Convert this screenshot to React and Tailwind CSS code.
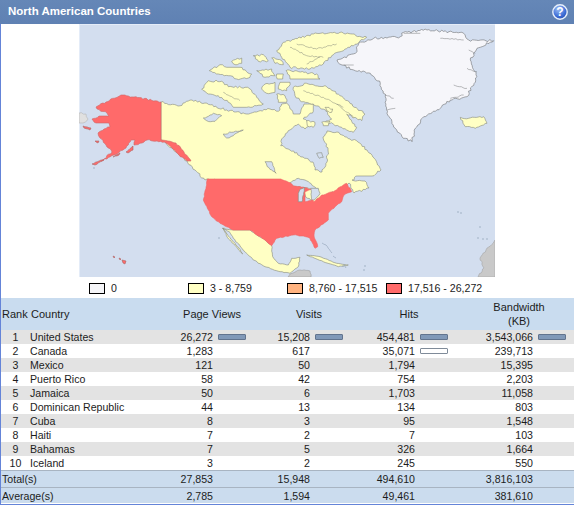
import React from "react";

const z9 = (a) => a.map(([x, y]) => [150 + x / 3, 24 + y / 3]);
const z10 = (a) => a.map(([x, y]) => [190 + x / 3, 150 + y / 3]);
const z2 = (a) => a.map(([x, y]) => [287 + x / 3, y / 3]);

let seed = 12345;
const rnd = () => {
  seed = (seed * 16807) % 2147483647;
  return seed / 2147483647 - 0.5;
};
function rough(pts, amp = 1.2, open = false) {
  let d = "";
  pts.forEach((p, i) => {
    if (open && i === pts.length - 1) {
      d += "L" + p[0].toFixed(1) + " " + p[1].toFixed(1);
      return;
    }
    const q = pts[(i + 1) % pts.length];
    const dx = q[0] - p[0];
    const dy = q[1] - p[1];
    d += (i === 0 ? "M" : "L") + p[0].toFixed(1) + " " + p[1].toFixed(1);
    if (dx === 0 || dy === 0) return;
    const len = Math.hypot(dx, dy);
    const n = Math.floor(len / 1.8);
    for (let k = 1; k < n; k++) {
      const t = k / n;
      const a = rnd() * amp * 3;
      d += "L" + (p[0] + dx * t - (dy / len) * a).toFixed(1) + " " + (p[1] + dy * t + (dx / len) * a).toFixed(1);
    }
  });
  return open ? d : d + "Z";
}

const YEL = "#ffffc4";
const RED = "#ff6a6a";
const WAT = "#d3deef";
const GRY = "#c9c9c9";
const COAST = "#85887a";

const canada = [
  [161, 102], [178, 106], [192, 100], [205, 103], ...z9([[230, 258], [290, 270], [325, 262], [360, 255], [385, 262], [395, 240], [410, 238], [430, 270], [450, 270], [462, 240], [490, 240], [490, 262], [460, 285], [485, 300], [465, 315], [445, 300], [415, 320], [395, 345], [392, 365]]),
  [290, 150], [303, 157], [313, 162], [315, 170], [322, 172], [327, 162], [328, 150], [323, 137], [327, 131], [337, 132], [350, 139], [358, 142], [367, 150], [377, 163], [381, 170], [372, 176], [358, 176], [352, 180], [365, 181], [369, 188], [354, 193], [349, 183], [330, 200], [313, 203], [300, 190], [207, 179], [205, 180], [195, 170], [187, 161], [179, 155], [172, 148], [166, 143], [161, 140],
];

const islands = [
  [[155, 195], [175, 170], [215, 172], [235, 188], [285, 190], [300, 195], [340, 240], [320, 245], [290, 250], [250, 250], [235, 235], [205, 215], [175, 210]],
  [[178, 140], [210, 122], [230, 130], [270, 130], [305, 150], [300, 160], [260, 165], [235, 155], [205, 150]],
  [[245, 112], [275, 102], [275, 118], [255, 122]],
  [[310, 95], [340, 92], [355, 110], [325, 112]],
  [[365, 102], [395, 110], [400, 122], [375, 118]],
  [[320, 140], [365, 135], [375, 155], [345, 160]],
  [[345, 180], [375, 175], [375, 205], [350, 208], [335, 195]],
  [[390, 175], [420, 175], [410, 200], [385, 195]],
  [[380, 210], [405, 215], [410, 235], [385, 235]],
  [[408, 140], [500, 150], [510, 165], [420, 165]],
  [[380, 150], [400, 150], [398, 165], [382, 165]],
  [[380, 80], [400, 55], [490, 30], [570, 25], [650, 40], [600, 70], [545, 95], [520, 120], [480, 135], [420, 130], [395, 100]],
  [[430, 190], [470, 178], [530, 188], [570, 215], [645, 270], [635, 290], [590, 270], [620, 310], [610, 325], [575, 310], [550, 300], [525, 295], [545, 285], [530, 260], [490, 240], [450, 230], [435, 215]],
  [[525, 250], [548, 255], [545, 265], [528, 262]],
  [[470, 290], [495, 295], [490, 310], [472, 305]],
  [[515, 295], [540, 292], [535, 305], [520, 305]],
].map(z9);

const fjords = [
  [[420, 70], [470, 95], [520, 100]], [[440, 60], [500, 75], [560, 60]], [[470, 120], [510, 100]], [[220, 205], [270, 230]], [[560, 240], [610, 280]], [[460, 200], [520, 220], [580, 250]],
].map(z9);

const greenland = z2([[150, 180], [205, 160], [215, 130], [260, 115], [340, 110], [350, 97], [420, 90], [530, 100], [545, 120], [620, 122], [570, 145], [550, 180], [570, 230], [540, 290], [490, 300], [460, 325], [410, 350], [385, 385], [375, 425], [345, 410], [325, 385], [300, 340], [295, 290], [280, 250], [250, 220], [200, 210], [165, 195]]);
const iceland = z2([[520, 352], [545, 355], [590, 350], [600, 370], [565, 385], [535, 380]]);

const greenFjords = [[[350, 100], [400, 100]], [[460, 115], [530, 120]], [[545, 150], [565, 160]], [[540, 205], [570, 215]], [[500, 255], [540, 265]], [[490, 295], [530, 285]], [[295, 285], [320, 295]], [[300, 330], [325, 325]], [[170, 195], [200, 195]]].map(z2);

const alaska = [[96, 107], [106, 102], [121, 95], [134, 97], [161, 102], [161, 140], [168, 141], [176, 143], [184, 152], [191, 161], [187, 161], [179, 155], [172, 148], [166, 143], [157, 141], [147, 140], [142, 143], [134, 145], [135, 140], [131, 140], [126, 148], [114, 155], [101, 161], [112, 152], [106, 145], [100, 138], [98, 133], [104, 129], [110, 127], [109, 123], [96, 123], [92, 119], [101, 116], [109, 116], [107, 113], [97, 109]];
const alaskaBits = [[[92, 164], [101, 160], [104, 160], [95, 165]], [[126, 152], [133, 146], [133, 150], [128, 153]], [[83, 126], [91, 128], [90, 130], [84, 128]], [[95, 141], [99, 141], [98, 143]], [[113, 157], [120, 153], [119, 155]]];
const hawaii = [[[113, 256], [115, 257], [114, 258]], [[119, 258], [121, 259], [120, 260]], [[122, 260], [126, 261], [125, 264], [123, 263]]];

const usa = z10([[52, 87], [272, 87], [300, 98], [310, 108], [340, 112], [362, 118], [345, 125], [345, 155], [368, 150], [372, 155], [395, 135], [430, 125], [460, 105], [470, 100], [485, 125], [462, 135], [455, 155], [435, 170], [415, 190], [415, 210], [375, 240], [372, 255], [383, 290], [375, 295], [360, 265], [340, 258], [310, 255], [260, 265], [245, 287], [225, 270], [205, 258], [180, 240], [130, 240], [90, 220], [65, 200], [40, 150], [50, 105]]);

const lakes = [
  [[300, 98], [325, 85], [345, 90], [385, 118], [362, 118], [340, 112], [310, 108]],
  [[362, 115], [385, 115], [390, 130], [372, 150], [365, 150]],
  [[378, 150], [420, 130], [428, 125], [402, 145]],
  [[225, 35], [245, 35], [258, 70], [245, 60], [232, 50]],
  [[380, 10], [395, 8], [400, 22], [388, 25]],
].map(z10);
const canadaLakes = [
  [[160, 282], [190, 268], [215, 275], [195, 292], [170, 290]],
  [[220, 330], [245, 325], [280, 318], [250, 335], [230, 342]],
].map(z9);
const lakeMichigan = z10([[330, 118], [345, 112], [336, 155], [325, 155], [325, 130]]);

const mexico = z10([[97, 235], [130, 240], [180, 240], [205, 258], [225, 270], [245, 287], [248, 320], [265, 340], [295, 345], [305, 325], [330, 322], [325, 350], [300, 370], [270, 365], [225, 350], [190, 330], [165, 305], [130, 265], [118, 245]]);
const baja = z10([[100, 235], [115, 258], [150, 298], [158, 312], [138, 290], [112, 262]]);
const cuba = z10([[350, 315], [390, 320], [440, 340], [475, 345], [445, 350], [400, 335]]);
const bahamas = [[[322, 243], [326, 245], [332, 253]], [[333, 256], [336, 258]], [[344, 264], [346, 268]]];
const centralAm = [[290, 274], [300, 270], [310, 271], [311, 277], [288, 277]];
const southAm = [[480, 258], [486, 250], [495, 240], [495, 277], [478, 277], [484, 268]];
const siberia = [[79, 113], [86, 114], [88, 119], [83, 123], [79, 123]];
const dots = [[458, 212], [461, 213], [480, 227], [478, 238], [483, 239], [487, 239], [365, 266], [343, 266], [364, 270], [94, 168], [219, 238]];

function Land({ d, fill = YEL, stroke = COAST, sw = 0.6 }) {
  return <path d={d} fill={fill} stroke={stroke} strokeWidth={sw} strokeLinejoin="round" />;
}

function MapArt() {
  seed = 12345;
  return (
    <svg width="416" height="253" viewBox="79 24 416 253" className="block">
      <rect x="79" y="24" width="416" height="253" fill={WAT} />
      <rect x="79" y="24" width="416" height="1" fill="#e4ecf8" />
      <rect x="79" y="24" width="1" height="253" fill="#e4ecf8" />
      <Land d={rough(siberia, 0.5)} fill="#e0e0e0" stroke="#b5b5b5" />
      <Land d={rough(canada, 0.7)} />
      {islands.map((p, i) => <Land key={i} d={rough(p, 0.7)} />)}
      {fjords.map((p, i) => <path key={i} d={rough(p, 0.5, true)} fill="none" stroke={COAST} strokeWidth="0.5" />)}
      <Land d={rough(greenland, 0.8)} fill="#f6f6fa" stroke="#6f7172" />
      {greenFjords.map((p, i) => <path key={i} d={rough(p, 0.5, true)} fill="none" stroke="#77797a" strokeWidth="0.5" />)}
      <Land d={rough(iceland, 0.5)} />
      {canadaLakes.map((p, i) => <Land key={i} d={rough(p, 0.5)} fill={WAT} />)}
      {lakes.map((p, i) => <Land key={i} d={rough(p, 0.4)} fill={WAT} />)}
      <Land d={rough(mexico, 0.3)} />
      <Land d={rough(baja, 0.2)} fill={YEL} />
      <Land d={rough(cuba, 0.2)} />
      {bahamas.map((p, i) => <path key={i} d={rough(p, 0.2, true)} fill="none" stroke="#8fa0b5" strokeWidth="0.6" />)}
      <Land d={rough(centralAm, 0.4)} fill={GRY} stroke="#a0a0a0" />
      <Land d={rough(southAm, 0.5)} fill={GRY} stroke="#a5a5a5" />
      <Land d={rough(alaska, 0.5)} fill={RED} stroke="#c66" />
      {alaskaBits.map((p, i) => <Land key={i} d={rough(p, 0.2)} fill={RED} stroke="#a66" />)}
      {hawaii.map((p, i) => <Land key={i} d={rough(p, 0.1)} fill={RED} stroke="#a66" />)}
      <Land d={rough(usa, 0.3)} fill={RED} stroke="#e66" />
      <Land d={rough(lakeMichigan, 0.3)} fill={WAT} />
      {dots.map(([x, y], i) => <circle key={i} cx={x} cy={y} r="0.7" fill="#8fa0b5" />)}
    </svg>
  );
}

function HelpIcon() {
  return (
    <svg width="18" height="18" viewBox="0 0 18 18">
      <defs>
        <radialGradient id="hb" cx="0.4" cy="0.3" r="0.8">
          <stop offset="0" stopColor="#9fc0f4" />
          <stop offset="0.6" stopColor="#3f6fd8" />
          <stop offset="1" stopColor="#2347a8" />
        </radialGradient>
      </defs>
      <circle cx="9" cy="9" r="7.2" fill="url(#hb)" stroke="#e8f0fb" strokeWidth="1.4" />
      <text x="9" y="13.2" textAnchor="middle" fontSize="12" fontWeight="700" fill="#fff" fontFamily="'Liberation Sans', sans-serif">?</text>
    </svg>
  );
}

const legend = [
  ["0", "bg-[#f5f5f8]"],
  ["3 - 8,759", "bg-[#ffffc4]"],
  ["8,760 - 17,515", "bg-[#ffb380]"],
  ["17,516 - 26,272", "bg-[#ff6a6a]"],
];

const rows = [
  [1, "United States", "26,272", "15,208", "454,481", "3,543,066"],
  [2, "Canada", "1,283", "617", "35,071", "239,713"],
  [3, "Mexico", "121", "50", "1,794", "15,395"],
  [4, "Puerto Rico", "58", "42", "754", "2,203"],
  [5, "Jamaica", "50", "6", "1,703", "11,058"],
  [6, "Dominican Republic", "44", "13", "134", "803"],
  [7, "Cuba", "8", "3", "95", "1,548"],
  [8, "Haiti", "7", "2", "7", "103"],
  [9, "Bahamas", "7", "5", "326", "1,664"],
  [10, "Iceland", "3", "2", "245", "550"],
];

const bodyCols = "grid grid-cols-[29px_120px_63px_38px_59px_38px_67px_38px_80px_40px]";

function Bar({ white }) {
  return (
    <div
      className={
        "ml-[5px] mt-[4px] w-[28px] h-[6px] rounded-[1px] border " +
        (white ? "bg-white border-[#7f8b99]" : "bg-[#8199b8] border-[#62748e]")
      }
    />
  );
}

function Row({ r, i }) {
  return (
    <div className={bodyCols + " h-[14px] leading-[14px] " + (i % 2 === 0 ? "bg-[#e3e3e3]" : "bg-white")}>
      <div className="text-center">{r[0]}</div>
      <div>{r[1]}</div>
      <div className="text-right">{r[2]}</div>
      <div>{i === 0 && <Bar />}</div>
      <div className="text-right">{r[3]}</div>
      <div>{i === 0 && <Bar />}</div>
      <div className="text-right">{r[4]}</div>
      <div>{i === 0 ? <Bar /> : i === 1 ? <Bar white /> : null}</div>
      <div className="text-right">{r[5]}</div>
      <div>{i === 0 && <Bar />}</div>
    </div>
  );
}

function Summary({ label, v, cls }) {
  return (
    <div className={bodyCols + " bg-[#cbdcee] leading-[16px] " + cls}>
      <div className="col-span-2 pl-[1px]">{label}</div>
      <div className="text-right">{v[0]}</div>
      <div />
      <div className="text-right">{v[1]}</div>
      <div />
      <div className="text-right">{v[2]}</div>
      <div />
      <div className="text-right">{v[3]}</div>
      <div />
    </div>
  );
}

export default function App() {
  return (
    <div className="w-[574px] h-[505px] overflow-hidden bg-white text-[10.6px] text-[#1c1c1c] font-['Liberation_Sans',Arial,sans-serif]">
      <div className="h-[24px] flex items-center justify-between pl-[8px] pr-[5px] bg-gradient-to-b from-[#6587b7] to-[#5f81b3] text-white font-bold text-[11.5px]">
        <span>North American Countries</span>
        <HelpIcon />
      </div>
      <div className="h-[481px] border-l border-b border-[#6484d8]">
        <div className="flex justify-center -ml-px">
          <MapArt />
        </div>
        <div className="h-[21px] pl-[88px] pt-[6px] flex">
          {legend.map(([t, c]) => (
            <div key={t} className="w-[99px] flex items-center h-[11px]">
              <div className={"w-[16px] h-[11px] border border-black " + c} />
              <span className="ml-[6px]">{t}</span>
            </div>
          ))}
        </div>
        <div className="grid grid-cols-[29px_130px_104px_90px_110px_110px] h-[32px] bg-[#c9dcef] items-center text-[11px]">
          <div className="pl-[1px]">Rank</div>
          <div className="pl-px">Country</div>
          <div className="text-center">Page Views</div>
          <div className="text-center">Visits</div>
          <div className="text-center">Hits</div>
          <div className="text-center leading-[14px]">Bandwidth<br />(KB)</div>
        </div>
        {rows.map((r, i) => <Row key={r[0]} r={r} i={i} />)}
        <Summary label="Total(s)" v={["27,853", "15,948", "494,610", "3,816,103"]} cls="h-[17px] border-t border-[#a8b4c2]" />
        <Summary label="Average(s)" v={["2,785", "1,594", "49,461", "381,610"]} cls="h-[16px] border-t border-[#a8b4c2]" />
      </div>
    </div>
  );
}
